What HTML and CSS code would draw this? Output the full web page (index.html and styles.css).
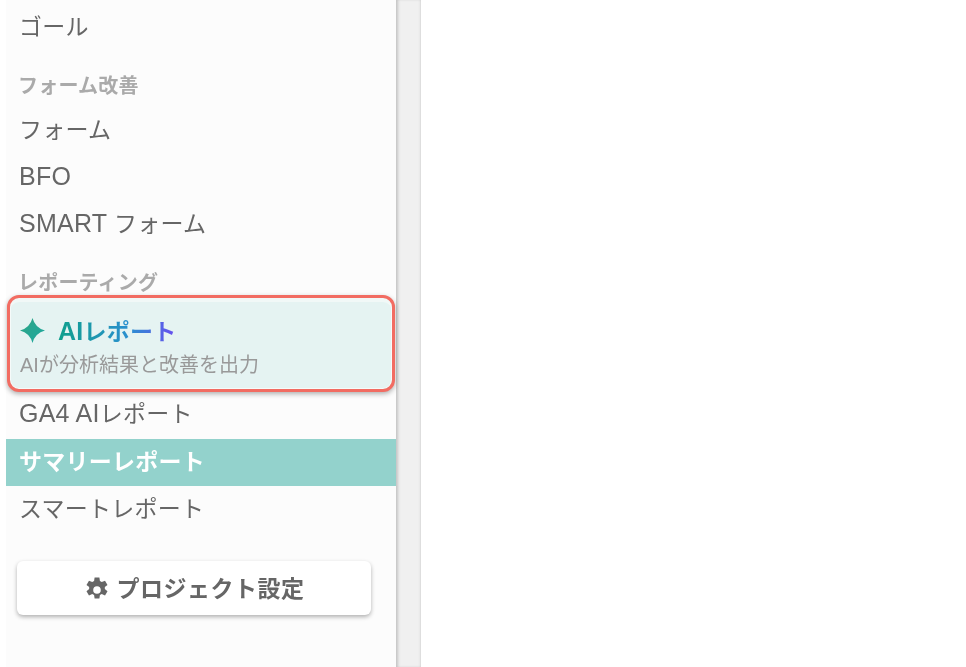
FILE: index.html
```html
<!DOCTYPE html>
<html lang="ja">
<head>
  <meta charset="UTF-8">
  <title>サマリーレポート</title>
  <link rel="stylesheet" href="styles.css">
</head>
<body>
  <div class="layout">
    <nav class="sidebar">
      <a class="nav-item" href="#">ゴール</a>

      <p class="nav-heading">フォーム改善</p>
      <a class="nav-item" href="#">フォーム</a>
      <a class="nav-item" href="#"><span class="en">BFO</span></a>
      <a class="nav-item" href="#"><span class="en">SMART </span>フォーム</a>

      <p class="nav-heading">レポーティング</p>
      <a class="ai-card" href="#">
        <span class="ai-title">
          <svg class="ai-icon" viewBox="0 0 24 24">
            <defs>
              <linearGradient id="spark" x1="0" y1="0" x2="1" y2="1">
                <stop offset="0" stop-color="#2fa585"/>
                <stop offset="1" stop-color="#1da8a0"/>
              </linearGradient>
            </defs>
            <path fill="url(#spark)" d="M12 0Q14.5 9.5 24 12Q14.5 14.5 12 24Q9.5 14.5 0 12Q9.5 9.5 12 0Z"/>
          </svg>
          <span class="ai-label"><span class="en">AI</span>レポート</span>
        </span>
        <span class="ai-sub">AIが分析結果と改善を出力</span>
      </a>
      <a class="nav-item" href="#"><span class="en">GA4 AI</span>レポート</a>
      <a class="nav-item active" href="#">サマリーレポート</a>
      <a class="nav-item" href="#">スマートレポート</a>

      <div class="settings-wrap">
        <button class="settings-button">
          <svg class="gear" viewBox="0 0 24 24">
            <path fill="#666" fill-rule="evenodd" d="M14.2 0.5l.5 3.2c.6.2 1.2.5 1.7.9l3-1.2 2.3 3.9-2.5 2c.1.6.1 1.2 0 1.8l2.5 2-2.3 3.9-3-1.2c-.5.4-1.1.7-1.7.9l-.5 3.2H9.8l-.5-3.2c-.6-.2-1.2-.5-1.7-.9l-3 1.2-2.3-3.9 2.5-2c-.1-.6-.1-1.2 0-1.8l-2.5-2 2.3-3.9 3 1.2c.5-.4 1.1-.7 1.7-.9l.5-3.2h4.4zM12 8.5a3.5 3.5 0 1 0 0 7 3.5 3.5 0 0 0 0-7z"/>
          </svg>
          <span class="settings-text">プロジェクト設定</span>
        </button>
      </div>
    </nav>
    <div class="gutter"></div>
    <main class="content"></main>
  </div>
</body>
</html>
```

FILE: styles.css
```css
html, body {
  height: 100%;
}

body {
  margin: 0;
  background: #fff;
  color: #666;
  font-family: "Liberation Sans", "Noto Sans CJK JP", sans-serif;
  overflow: hidden;
}

.layout {
  display: flex;
  height: 667px;
  padding-left: 6px;
}

.sidebar {
  width: 390px;
  flex-shrink: 0;
  padding-top: 4px;
  background: #fcfcfc;
  box-sizing: border-box;
  filter: blur(0.4px);
}

.gutter {
  width: 25px;
  flex-shrink: 0;
  background: #f0f0f0;
  box-shadow: inset 3px 0 3px -1px #c4c4c4, inset -2px 0 2px -1px #d8d8d8;
}

.content {
  flex: 1;
  background: #fff;
}

.nav-item {
  display: block;
  height: 47px;
  padding-left: 13px;
  font-size: 23px;
  line-height: 46px;
  letter-spacing: 0.25px;
  color: #666;
  text-decoration: none;
}

.nav-item.active {
  background: #93d2cc;
  color: #fff;
  font-weight: 700;
}

.ai-card + .nav-item {
  line-height: 44px;
}

.en {
  font-size: 25px;
  line-height: 1;
}

.nav-heading {
  margin: 22px 0 7px;
  padding-left: 12px;
  font-size: 20px;
  line-height: 27px;
  font-weight: 700;
  letter-spacing: 0.2px;
  color: #aaa;
}

.ai-card {
  display: block;
  width: 388px;
  height: 97px;
  margin: -9px 0 0 1px;
  padding: 11px 0 0 10px;
  box-sizing: border-box;
  border: 3px solid #f26c62;
  border-radius: 12px;
  background: #e5f3f2;
  box-shadow: 0 2px 5px rgba(0, 0, 0, 0.3), inset 0 4px 0 #f1f8f7, inset 0 0 0 1px #f6fbfa;
  text-decoration: none;
}

.ai-title {
  display: flex;
  align-items: center;
  gap: 13px;
  height: 42px;
}

.ai-icon {
  width: 25px;
  height: 25px;
}

.ai-label {
  font-size: 23px;
  font-weight: 700;
  letter-spacing: 0.25px;
  background: linear-gradient(90deg, #0f9f8c, #2b8fd0 60%, #6a4cf0);
  -webkit-background-clip: text;
  background-clip: text;
  color: transparent;
}

.ai-sub {
  display: block;
  font-size: 20px;
  line-height: 28px;
  color: #999;
}

.settings-wrap {
  margin-top: 28px;
  padding: 0 25px 0 11px;
}

.settings-button {
  display: flex;
  align-items: center;
  justify-content: center;
  gap: 7px;
  width: 100%;
  height: 54px;
  padding: 0;
  border: none;
  border-radius: 6px;
  background: #fff;
  box-shadow: 0 2px 4px rgba(0, 0, 0, 0.3);
  font-family: inherit;
  font-size: 23px;
  font-weight: 700;
  letter-spacing: 0.5px;
  color: #666;
}

.settings-text {
  margin-top: -3px;
}

.gear {
  width: 26px;
  height: 26px;
  margin-top: 4px;
}
```
